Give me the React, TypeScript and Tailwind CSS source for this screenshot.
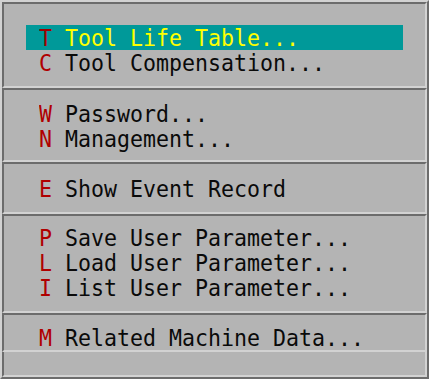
import React from 'react'

type Item = { key: string; label: string; active?: boolean }

// section layout mirrors the reference: padding top/bottom per group
const GROUPS: { items: Item[]; cls: string; rowH?: string }[] = [
  {
    cls: 'h-[86px] pt-[21px]',
    items: [
      { key: 'T', label: 'Tool Life Table...', active: true },
      { key: 'C', label: 'Tool Compensation...' },
    ],
  },
  {
    cls: 'h-[74px] pt-[11px]',
    items: [
      { key: 'W', label: 'Password...' },
      { key: 'N', label: 'Management...' },
    ],
  },
  {
    cls: 'h-[52px] pt-[12px]',
    items: [{ key: 'E', label: 'Show Event Record' }],
  },
  {
    cls: 'h-[99px] pt-[9px]',
    items: [
      { key: 'P', label: 'Save User Parameter...' },
      { key: 'L', label: 'Load User Parameter...' },
      { key: 'I', label: 'List User Parameter...' },
    ],
  },
  {
    cls: 'h-[39px] pt-[11px]',
    rowH: 'h-[24px] leading-[24px]',
    items: [{ key: 'M', label: 'Related Machine Data...' }],
  },
]

function Row({ item, rowH }: { item: Item; rowH?: string }) {
  return (
    <div
      className={`mx-[22px] pl-[13px] whitespace-pre ${rowH ?? 'h-[25px] leading-[25px]'} ${
        item.active ? 'bg-[#009999] text-[#ffff00]' : 'text-[#0a0a0a]'
      }`}
    >
      <span className="inline-block origin-center scale-y-[1.1]">
        <span className={item.active ? 'text-[#a00000]' : 'text-[#b00000]'}>{item.key}</span>
        {' ' + item.label}
      </span>
    </div>
  )
}

export default function App() {
  return (
    <div
      className="w-[429px] h-[379px] bg-[#b4b4b4] border-t-2 border-l-2 border-[#d2d2d2] border-r-2 border-b-2 border-r-[#6c6c6c] border-b-[#6c6c6c] flex flex-col text-[21.6px]"
      style={{ fontFamily: '"DejaVu Sans Mono", "Liberation Mono", monospace' }}
    >
      {GROUPS.map((g, i) => (
        <div
          key={i}
          className={`shrink-0 border-2 border-t-[#6c6c6c] border-l-[#6c6c6c] border-r-[#d2d2d2] border-b-[#d2d2d2] ${g.cls}`}
        >
          {g.items.map((it) => (
            <Row key={it.key} item={it} rowH={g.rowH} />
          ))}
        </div>
      ))}
      {/* empty trailing box, no top edge */}
      <div className="flex-1 border-l-2 border-r-2 border-b-2 border-l-[#6c6c6c] border-r-[#d2d2d2] border-b-[#d2d2d2]" />
    </div>
  )
}
